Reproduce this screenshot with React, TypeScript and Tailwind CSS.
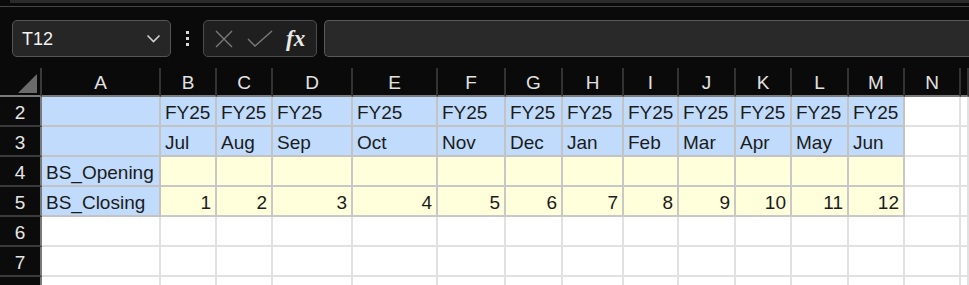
const cols = ['A', 'B', 'C', 'D', 'E', 'F', 'G', 'H', 'I', 'J', 'K', 'L', 'M', 'N', '']
const months = ['Jul', 'Aug', 'Sep', 'Oct', 'Nov', 'Dec', 'Jan', 'Feb', 'Mar', 'Apr', 'May', 'Jun']

const grid =
  'grid grid-cols-[42px_119px_56px_56px_80px_85px_68px_57px_61px_55px_57px_56px_57px_56px_56px_1fr]'

type Fill = 'blue' | 'yellow' | 'white'

const Cell = ({ fill, text, right }: { fill: Fill; text?: string; right?: boolean }) => {
  const bg =
    fill === 'blue'
      ? 'bg-[#c1dbfd] border-[#c3c3c3]'
      : fill === 'yellow'
        ? 'bg-[#ffffdc] border-[#c8c8c8]'
        : 'bg-white border-[#e1e1e1]'
  return (
    <div
      className={`h-[30px] border-r-2 border-b-2 ${bg} flex items-center overflow-hidden whitespace-nowrap text-[19px] leading-none pt-[2px] text-[#1b1b1b] ${
        right ? 'justify-end pr-[4px]' : 'pl-[4px]'
      }`}
    >
      {text}
    </div>
  )
}

const RowHead = ({ n }: { n?: number }) => (
  <div className="h-[30px] bg-[#0b0b0b] border-b-2 border-[#3a3a3a] border-r-2 border-r-[#7a7a7a] flex items-center justify-center text-[19px] leading-none pt-[2px] text-[#e6e6e6]">
    {n}
  </div>
)

const App = () => {
  const rows: { n: number; cells: { fill: Fill; text?: string; right?: boolean }[] }[] = [
    {
      n: 2,
      cells: [{ fill: 'blue' }, ...months.map(() => ({ fill: 'blue' as Fill, text: 'FY25' }))],
    },
    {
      n: 3,
      cells: [{ fill: 'blue' }, ...months.map((m) => ({ fill: 'blue' as Fill, text: m }))],
    },
    {
      n: 4,
      cells: [{ fill: 'blue', text: 'BS_Opening' }, ...months.map(() => ({ fill: 'yellow' as Fill }))],
    },
    {
      n: 5,
      cells: [
        { fill: 'blue', text: 'BS_Closing' },
        ...months.map((_, i) => ({ fill: 'yellow' as Fill, text: String(i + 1), right: true })),
      ],
    },
    { n: 6, cells: [] },
    { n: 7, cells: [] },
    { n: 8, cells: [] },
  ]

  return (
    <div className="w-[969px] h-[285px] overflow-hidden bg-[#0a0a0a] font-['Liberation_Sans',Arial,sans-serif]">
      {/* ribbon edge */}
      <div className="h-[3px] ml-[10px] bg-[#2b2b2b]" />
      <div className="h-[3px]" />
      <div className="h-px bg-[#474747]" />

      {/* name box + formula bar */}
      <div className="flex items-start h-[61px] pl-[12px] pt-[13px]">
        <div className="w-[159px] h-[37px] rounded-[5px] border border-[#555555] bg-[#262626] flex items-center justify-between pl-[9px] pr-[9px]">
          <span className="text-lg leading-none text-[#f2f2f2]">T12</span>
          <svg width="15" height="9" viewBox="0 0 15 9" fill="none">
            <path d="M1.5 1.5 L7.5 7.5 L13.5 1.5" stroke="#d0d0d0" strokeWidth="1.6" />
          </svg>
        </div>
        <div className="w-[32px] h-[37px] flex flex-col items-center justify-center gap-[3px]">
          <span className="w-[3px] h-[3px] bg-[#d8d8d8]" />
          <span className="w-[3px] h-[3px] bg-[#d8d8d8]" />
          <span className="w-[3px] h-[3px] bg-[#d8d8d8]" />
        </div>
        <div className="w-[114px] h-[37px] rounded-[5px] border border-[#4c4c4c] bg-[#1f1f1f] flex items-center pl-[10px]">
          <svg width="20" height="18" viewBox="0 0 20 18" fill="none">
            <path d="M2 1 L18 17 M18 1 L2 17" stroke="#7a7a7a" strokeWidth="1.4" />
          </svg>
          <svg className="ml-[13px]" width="26" height="18" viewBox="0 0 26 18" fill="none">
            <path d="M1 9 L8 16 L25 1" stroke="#7a7a7a" strokeWidth="1.4" />
          </svg>
          <span className="ml-[13px] text-[23px] italic font-bold font-['Liberation_Serif',serif] text-[#e8e8e8] leading-none">
            fx
          </span>
        </div>
        <div className="ml-[7px] flex-1 h-[37px] rounded-l-[5px] border border-r-0 border-[#5a5a5a] bg-[#292929]" />
      </div>

      {/* column headers */}
      <div className={`${grid} h-[29px]`}>
        <div className="relative border-r-2 border-[#3a3a3a] border-b-2 border-b-[#7a7a7a]">
          <svg className="absolute left-[18px] top-[6px]" width="19" height="19" viewBox="0 0 19 19">
            <path d="M19 0 L19 19 L0 19 Z" fill="#6b6b6b" />
          </svg>
        </div>
        {cols.map((c, i) => (
          <div
            key={i}
            className="border-r-2 border-[#333333] border-b-2 border-b-[#7a7a7a] flex items-center justify-center text-[19px] leading-none pt-[2px] text-[#e2e2e2]"
          >
            {c}
          </div>
        ))}
      </div>

      {/* rows */}
      {rows.map((r) => (
        <div key={r.n} className={grid}>
          <RowHead n={r.n < 8 ? r.n : undefined} />
          {cols.map((_, i) => {
            const c = r.cells[i]
            return c ? <Cell key={i} {...c} /> : <Cell key={i} fill="white" />
          })}
        </div>
      ))}
    </div>
  )
}

export default App
